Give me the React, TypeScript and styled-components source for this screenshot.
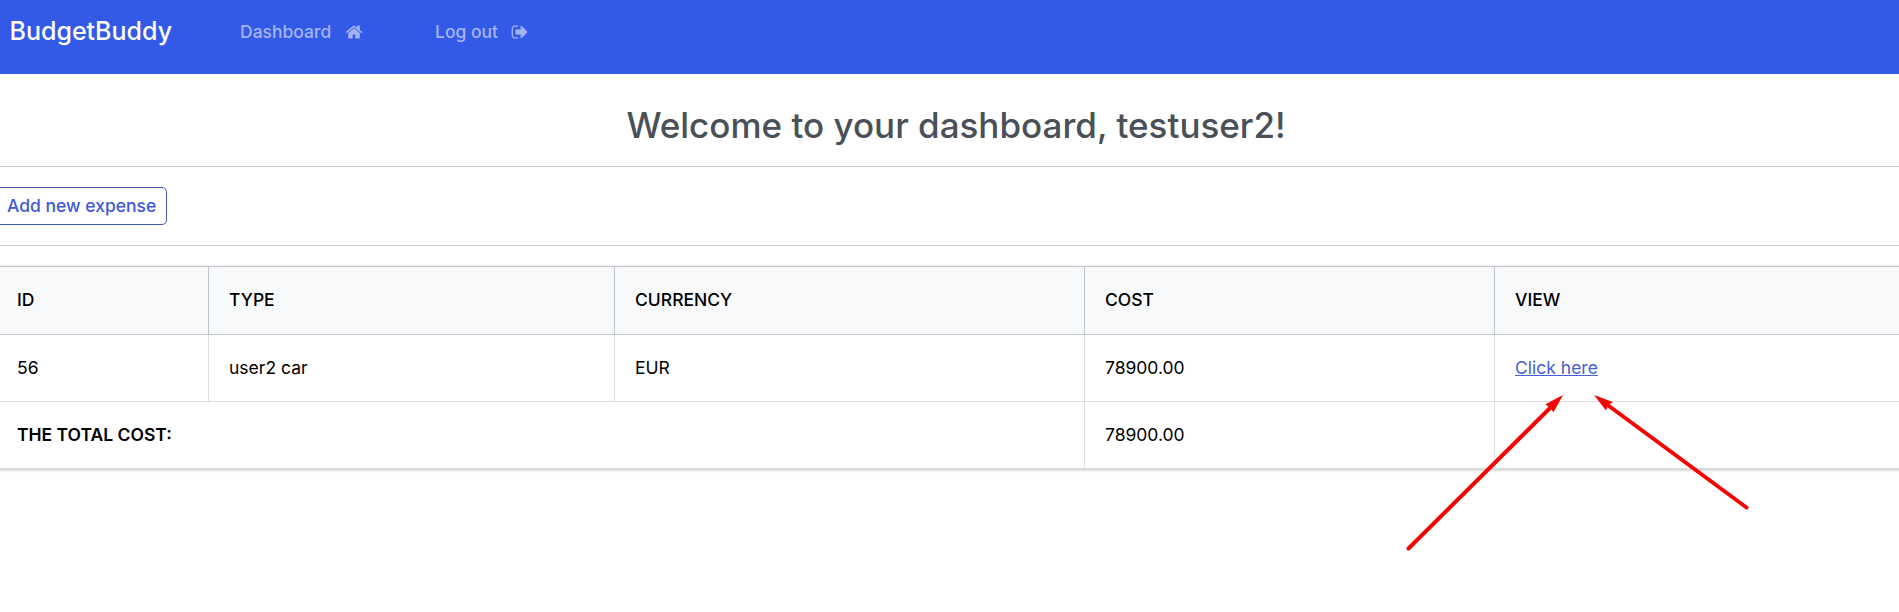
import React from "react";
import styled, { createGlobalStyle } from "styled-components";

const GlobalStyle = createGlobalStyle`
  *, *::before, *::after { box-sizing: border-box; }
  body {
    margin: 0;
    overflow: hidden;
    background: #fff;
    color: #000;
    font-family: Inter, "Liberation Sans", sans-serif;
    font-size: 17.5px;
    line-height: 27px;
  }
`;

const Page = styled.div`
  height: 612px;
  overflow: hidden;
  position: relative;
`;

const Navbar = styled.nav`
  display: flex;
  align-items: flex-start;
  height: 74px;
  padding: 12px 9.5px;
  background: #335ae7;
`;

const Brand = styled.a`
  width: 230.5px;
  color: #fff;
  font-size: 25px;
  font-weight: 500;
  line-height: 38px;
`;

const NavLink = styled.a<{ $width: number }>`
  display: flex;
  align-items: center;
  gap: 13.4px;
  width: ${(p) => p.$width}px;
  height: 39px;
  color: #a3b4f4;
  font-weight: 500;
  white-space: nowrap;
`;

const Icon = styled.svg`
  width: 18px;
  height: 18px;
  fill: currentColor;
`;

const Title = styled.h1`
  margin: 0;
  padding: 32px 0 22px 13px;
  color: #495057;
  font-size: 35px;
  font-weight: 500;
  line-height: 38px;
  text-align: center;
`;

const Actions = styled.section`
  height: 80px;
  padding-top: 20px;
  border: solid #c8cacc;
  border-width: 1px 0;
`;

const AddButton = styled.button`
  display: block;
  width: 172px;
  height: 38px;
  margin-left: -5px;
  padding: 0 10px 0 11px;
  border: 1px solid #3f5cb4;
  border-radius: 5px;
  background: #fff;
  color: #4059d4;
  font: 500 17.5px/34px Inter, "Liberation Sans", sans-serif;
  text-align: left;
  white-space: nowrap;
`;

const Table = styled.table`
  width: 1920px;
  margin: 20px 0 0 -3px;
  table-layout: fixed;
  border-collapse: separate;
  border-spacing: 0;
  box-shadow: 0 1px 3px rgba(0, 0, 0, 0.25);
`;

const HeadCell = styled.th`
  height: 69px;
  padding: 0 20px 2px;
  border: solid #c1c4c9;
  border-width: 1px 1px 1px 0;
  background: #f8f9fb;
  font-weight: 500;
  text-align: left;
`;

const Cell = styled.td<{ $bold?: boolean }>`
  height: 67px;
  padding: 0 20px 1px;
  border: solid #dcdee0;
  border-width: 0 1px 1px 0;
  font-weight: ${(p) => (p.$bold ? 600 : 400)};
`;

const ViewLink = styled.a`
  color: #4560d2;
  text-decoration: underline;
`;

const Annotations = styled.svg`
  position: absolute;
  left: 1400px;
  top: 390px;
`;

export default function App() {
  return (
    <Page>
      <GlobalStyle />
      <Navbar>
        <Brand>BudgetBuddy</Brand>
        <NavLink $width={195}>
          Dashboard
          <Icon viewBox="0 0 1792 1792">
            <path d="M1472 992v480q0 26-19 45t-45 19h-384v-384h-256v384h-384q-26 0-45-19t-19-45v-480q0-1 .5-3t.5-3l575-474 575 474q1 2 1 6zm223-69l-62 74q-8 9-21 11h-3q-13 0-21-7l-692-577-692 577q-12 8-24 7-13-2-21-11l-62-74q-8-10-7-23.5t11-21.5l719-599q32-26 76-26t76 26l244 204v-195q0-14 9-23t23-9h192q14 0 23 9t9 23v408l219 182q10 8 11 21.5t-7 23.5z" />
          </Icon>
        </NavLink>
        <NavLink $width={120}>
          Log out
          <Icon viewBox="0 0 1792 1792">
            <path d="M704 1440q0 4 1 20t.5 26.5-3 23.5-10 19.5-20.5 6.5h-320q-119 0-203.5-84.5t-84.5-203.5v-704q0-119 84.5-203.5t203.5-84.5h320q13 0 22.5 9.5t9.5 22.5q0 4 1 20t.5 26.5-3 23.5-10 19.5-20.5 6.5h-320q-66 0-113 47t-47 113v704q0 66 47 113t113 47h312l11.5 1 11.5 3 8 5.5 7 9 2 13.5zm928-544q0 26-19 45l-544 544q-19 19-45 19t-45-19-19-45v-288h-448q-26 0-45-19t-19-45v-384q0-26 19-45t45-19h448v-288q0-26 19-45t45-19 45 19l544 544q19 19 19 45z" />
          </Icon>
        </NavLink>
      </Navbar>
      <Title>Welcome to your dashboard, testuser2!</Title>
      <Actions>
        <AddButton>Add new expense</AddButton>
      </Actions>
      <Table>
        <colgroup>
          <col style={{ width: 212 }} />
          <col style={{ width: 406 }} />
          <col style={{ width: 470 }} />
          <col style={{ width: 410 }} />
          <col />
        </colgroup>
        <thead>
          <tr>
            <HeadCell>ID</HeadCell>
            <HeadCell>TYPE</HeadCell>
            <HeadCell>CURRENCY</HeadCell>
            <HeadCell>COST</HeadCell>
            <HeadCell>VIEW</HeadCell>
          </tr>
        </thead>
        <tbody>
          <tr>
            <Cell>56</Cell>
            <Cell>user2 car</Cell>
            <Cell>EUR</Cell>
            <Cell>78900.00</Cell>
            <Cell>
              <ViewLink>Click here</ViewLink>
            </Cell>
          </tr>
          <tr>
            <Cell colSpan={3} $bold>
              THE TOTAL COST:
            </Cell>
            <Cell>78900.00</Cell>
            <Cell />
          </tr>
        </tbody>
      </Table>
      <Annotations width="360" height="170" fill="#f60404" stroke="#f60404">
        <path d="M8.5 158.5 L151 17" strokeWidth="4" strokeLinecap="round" />
        <path d="M163 5 L145.5 14.3 L149.5 17.5 L153.5 22.3 Z" stroke="none" />
        <path d="M346.5 117.5 L209 16" strokeWidth="4" strokeLinecap="round" />
        <path d="M194 5 L213 12 L208 15.5 L206 20.5 Z" stroke="none" />
      </Annotations>
    </Page>
  );
}
